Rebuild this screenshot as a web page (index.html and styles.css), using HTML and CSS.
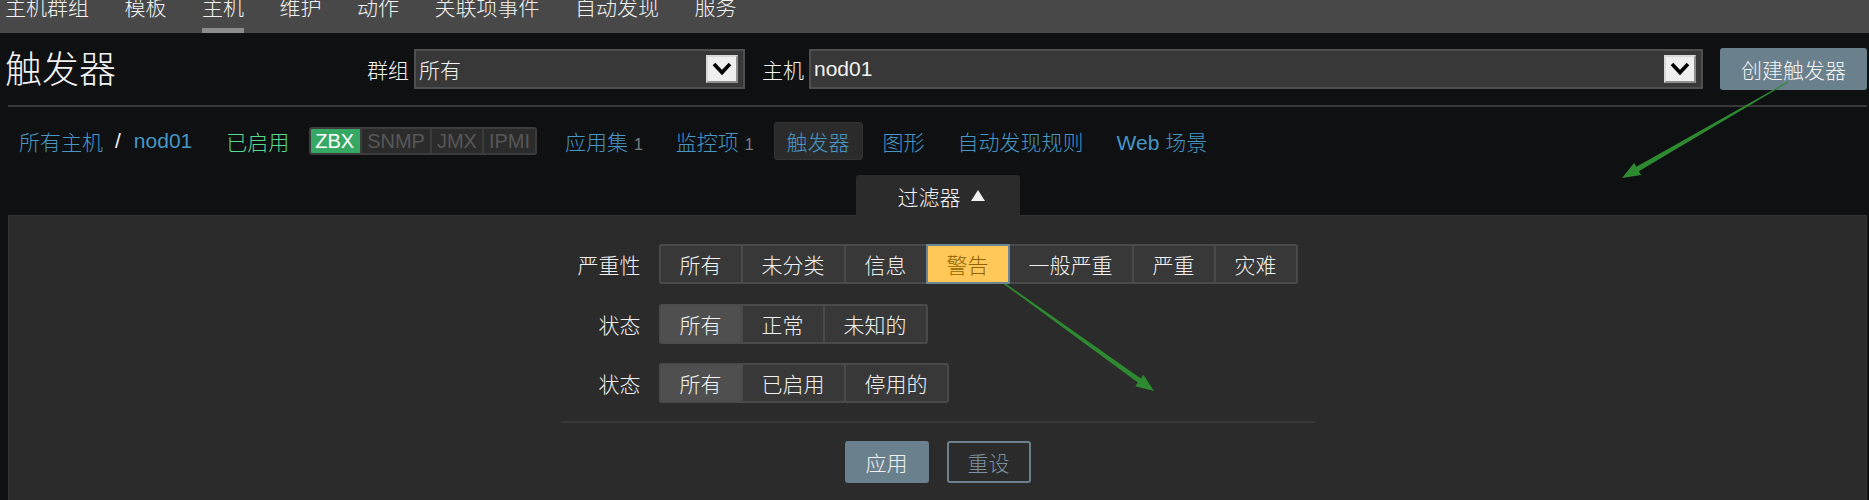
FILE: index.html
```html
<!DOCTYPE html>
<html lang="zh-CN">
<head>
<meta charset="utf-8">
<title>触发器</title>
<link rel="stylesheet" href="styles.css">
</head>
<body>
<nav class="topnav">
  <a class="nav-item">主机群组</a>
  <a class="nav-item">模板</a>
  <a class="nav-item active">主机</a>
  <a class="nav-item">维护</a>
  <a class="nav-item">动作</a>
  <a class="nav-item">关联项事件</a>
  <a class="nav-item">自动发现</a>
  <a class="nav-item">服务</a>
</nav>

<header class="header">
  <h1 class="title">触发器</h1>
  <div class="controls">
    <label class="ctl-label">群组</label>
    <div class="select select-group"><span>所有</span><span class="sel-arrow"><svg width="28" height="24" viewBox="0 0 28 24"><polyline points="6,7 14,15.5 22,7" fill="none" stroke="#000" stroke-width="3.6"/></svg></span></div>
    <label class="ctl-label ctl-label-2">主机</label>
    <div class="select select-host"><span>nod01</span><span class="sel-arrow"><svg width="28" height="24" viewBox="0 0 28 24"><polyline points="6,7 14,15.5 22,7" fill="none" stroke="#000" stroke-width="3.6"/></svg></span></div>
    <button class="btn btn-create">创建触发器</button>
  </div>
</header>
<div class="rule"></div>

<div class="subnav">
  <a class="link">所有主机</a><span class="crumb-sep">/</span><a class="link">nod01</a>
  <span class="enabled">已启用</span>
  <div class="status">
    <span class="st st-on">ZBX</span><span class="st">SNMP</span><span class="st">JMX</span><span class="st">IPMI</span>
  </div>
  <ul class="tabs">
    <li><span><a class="link">应用集</a> <span class="count">1</span></span></li>
    <li><span><a class="link">监控项</a> <span class="count">1</span></span></li>
    <li class="selected"><a class="link">触发器</a></li>
    <li><a class="link">图形</a></li>
    <li><a class="link">自动发现规则</a></li>
    <li><a class="link">Web 场景</a></li>
  </ul>
</div>

<div class="filter-tabs">
  <div class="filter-tab">过滤器<span class="tri"></span></div>
</div>
<section class="filter-panel">
  <div class="filter-form">
    <div class="form-grid">
      <div class="f-label">严重性</div>
      <div class="seg">
        <span>所有</span><span>未分类</span><span>信息</span><span class="warn">警告</span><span>一般严重</span><span>严重</span><span>灾难</span>
      </div>
      <div class="f-label">状态</div>
      <div class="seg">
        <span class="on">所有</span><span>正常</span><span>未知的</span>
      </div>
      <div class="f-label">状态</div>
      <div class="seg">
        <span class="on">所有</span><span>已启用</span><span>停用的</span>
      </div>
    </div>
    <div class="form-rule"></div>
    <div class="form-buttons">
      <button class="btn btn-apply">应用</button>
      <button class="btn btn-reset">重设</button>
    </div>
  </div>
</section>

<svg class="annot" width="1869" height="500" viewBox="0 0 1869 500">
  <polygon fill="#2e8a30" points="1788.25,82.43 1638.85,171.16 1641.1,175.1 1622,178 1634.1,162.9 1636.35,166.84 1787.75,81.57"/>
  <polygon fill="#2e8a30" points="983.71,269.41 1137.91,382.53 1135.29,386.19 1154,391 1143.45,374.81 1140.83,378.47 984.29,268.59"/>
</svg>
</body>
</html>
```

FILE: styles.css
```css
* { box-sizing: border-box; }
html, body { margin: 0; padding: 0; }
body {
  background: #0e1012;
  color: #f2f2f2;
  font-family: "Liberation Sans", "Noto Sans CJK SC", sans-serif;
  font-size: 21px;
  font-weight: 300;
  width: 1869px;
  height: 500px;
  overflow: hidden;
  position: relative;
}
a { color: inherit; text-decoration: none; }

/* top navigation */
.topnav {
  height: 33px;
  background: #484848;
  display: flex;
  gap: 35.5px;
  padding-left: 5px;
  overflow: hidden;
}
.nav-item {
  display: block;
  margin-top: -3px;
  height: 36px;
  line-height: 21px;
  border-bottom: 5px solid transparent;
  color: #f2f2f2;
}
.nav-item.active { border-bottom-color: #8c8c8c; }

/* header */
.header {
  height: 72px;
  display: flex;
  align-items: center;
  padding: 0 2px 0 5px;
}
.title {
  flex: 1;
  margin: 0;
  font-size: 37px;
  font-weight: 300;
  line-height: 44px;
  padding-top: 4px;
}
.controls { display: flex; align-items: center; }
.ctl-label { margin-right: 5px; }
.ctl-label-2 { margin-left: 17px; }
.select {
  height: 40px;
  background: #383838;
  border: 2px solid #4f4f4f;
  display: flex;
  align-items: center;
  justify-content: space-between;
  padding: 0 5px 0 3px;
}
.select-group { width: 331px; }
.select-host { width: 894px; }
.sel-arrow {
  width: 32px;
  height: 28px;
  background: #efefef;
  border: 2px solid;
  border-color: #d8d8d8 #8f8f8f #8f8f8f #d8d8d8;
  display: flex;
  align-items: center;
  justify-content: center;
}
.btn {
  font-family: inherit;
  font-size: 21px;
  font-weight: 300;
  border-radius: 3px;
  cursor: pointer;
}
.btn-create {
  margin-left: 17px;
  width: 147px;
  height: 42px;
  background: #6a808c;
  color: #f2f2f2;
  border: none;
  padding: 0;
}

.rule {
  height: 2px;
  background: #383838;
  margin: 0 2px 0 8px;
}

/* sub navigation */
.subnav {
  height: 68px;
  display: flex;
  align-items: center;
  padding-left: 19px;
}
.link { color: #4796c4; }
.crumb-sep { margin: 0 13px 0 12px; color: #f2f2f2; }
.enabled { color: #59db8f; margin-left: 34px; }
.status {
  margin-left: 20px;
  display: flex;
  height: 28px;
  border-radius: 3px;
  background: #2b2b2b;
  border: 2px solid #3c3c3c;
  font-size: 20px;
  font-weight: 400;
  overflow: hidden;
}
.st {
  display: flex;
  align-items: center;
  padding: 0 5px;
  color: #575757;
  border-left: 2px solid #3c3c3c;
}
.st-on {
  background: #35a964;
  color: #ffffff;
  border-left: none;
  padding: 0 6px;
  margin: -2px 0 -2px -2px;
  border-radius: 3px 0 0 3px;
}
.tabs {
  list-style: none;
  margin: 0 0 0 15px;
  padding: 0;
  display: flex;
  align-items: center;
  gap: 7px;
}
.tabs li {
  height: 38px;
  display: flex;
  align-items: center;
  padding: 0 12px;
  border: 1px solid transparent;
  border-radius: 3px;
  white-space: pre;
}
.tabs li.selected {
  background: #2b2b2b;
  border-color: #333333;
}
.count { font-size: 16px; color: #7d7d7d; }

/* filter */
.filter-tabs {
  display: flex;
  justify-content: center;
  margin: 0 2px 0 8px;
  height: 40px;
}
.filter-tab {
  width: 164px;
  height: 41px;
  margin-bottom: -1px;
  position: relative;
  z-index: 1;
  background: #2b2b2b;
  border-radius: 3px 3px 0 0;
  display: flex;
  align-items: center;
  padding-left: 42px;
  color: #f2f2f2;
}
.tri {
  width: 0;
  height: 0;
  margin-left: 10px;
  border-left: 7px solid transparent;
  border-right: 7px solid transparent;
  border-bottom: 11px solid #f2f2f2;
}
.filter-panel {
  margin: 0 2px 0 8px;
  height: 300px;
  background: #2b2b2b;
  border: 1px solid #333333;
  padding-top: 28px;
}
.filter-form { width: 754px; margin: 0 auto; }
.form-grid {
  display: grid;
  grid-template-columns: 80px auto;
  column-gap: 18px;
  row-gap: 19.5px;
  justify-content: start;
}
.f-label { text-align: right; align-self: center; }
.seg { display: flex; height: 40px; justify-self: start; }
.seg span {
  display: flex;
  align-items: center;
  padding: 0 19px;
  background: #383838;
  border: 2px solid #4a4a4a;
  margin-left: -2px;
  color: #f2f2f2;
}
.seg span:first-child { margin-left: 0; border-radius: 3px 0 0 3px; }
.seg span:last-child { border-radius: 0 3px 3px 0; }
.seg span.on { background: #4f4f4f; }
.seg span.warn {
  background: #ffc859;
  color: #8f6300;
  border-color: #6d8593;
  position: relative;
  z-index: 1;
}
.form-rule {
  height: 2px;
  background: #383838;
  margin-top: 18px;
}
.form-buttons {
  display: flex;
  justify-content: center;
  gap: 18px;
  margin-top: 18px;
}
.btn-apply {
  width: 84px;
  height: 42px;
  background: #6a808c;
  color: #f2f2f2;
  border: none;
  padding: 0;
}
.btn-reset {
  width: 84px;
  height: 42px;
  background: transparent;
  color: #7a909c;
  border: 2px solid #6a808c;
  padding: 0;
}

.annot {
  position: absolute;
  top: 0;
  left: 0;
  pointer-events: none;
}
```
